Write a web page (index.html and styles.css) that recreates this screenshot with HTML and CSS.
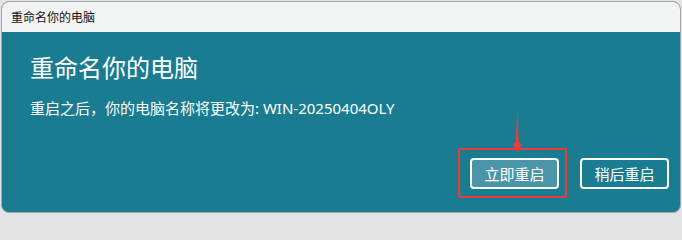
FILE: index.html
```html
<!DOCTYPE html>
<html lang="zh-CN">
<head>
<meta charset="utf-8">
<title>重命名你的电脑</title>
<link rel="stylesheet" href="styles.css">
</head>
<body>
<div class="window">
  <div class="titlebar">重命名你的电脑</div>
  <div class="content">
    <h1 class="heading">重命名你的电脑</h1>
    <p class="message">重启之后，你的电脑名称将更改为: WIN-20250404OLY</p>
    <div class="actions">
      <div class="primary-wrap">
        <button class="btn btn-primary">立即重启</button>
        <span class="highlight"></span>
        <svg class="arrow" width="14" height="44" viewBox="0 0 14 44">
          <polygon points="7,0 7.6,0 8.6,30 11.5,32 7.3,41 3,32 5.8,30" fill="#f03a3a"/>
        </svg>
      </div>
      <button class="btn">稍后重启</button>
    </div>
  </div>
</div>
</body>
</html>
```

FILE: styles.css
```css
html, body {
  margin: 0;
  padding: 0;
}
body {
  background: #e4e4e4;
  width: 682px;
  height: 215px;
  overflow: hidden;
  font-family: "Segoe UI", "Noto Sans", "Noto Sans CJK SC", sans-serif;
}
.window {
  margin: 1px 0 0 1px;
  width: 680px;
  height: 212px;
  box-sizing: border-box;
  border: 1px solid #a6a6a6;
  border-radius: 8px;
  overflow: hidden;
  display: flex;
  flex-direction: column;
  background: #197c91;
}
.titlebar {
  height: 30px;
  flex: none;
  background: #f2f3f3;
  color: #111;
  font-size: 12px;
  line-height: 30px;
  padding-left: 9px;
  font-family: "Noto Sans CJK SC", sans-serif;
}
.content {
  flex: 1;
  display: flex;
  flex-direction: column;
  padding: 0 11px 23px 28px;
  color: #fff;
}
.heading {
  margin: 19px 0 0;
  font-size: 24px;
  line-height: 32px;
  font-weight: 400;
  font-family: "Noto Sans CJK SC", sans-serif;
}
.message {
  margin: 15px 0 0;
  font-size: 15px;
  line-height: 20px;
}
.actions {
  margin-top: auto;
  display: flex;
  justify-content: flex-end;
  gap: 21px;
}
.primary-wrap {
  position: relative;
  display: flex;
}
.btn {
  width: 89px;
  height: 31px;
  box-sizing: border-box;
  border: 2px solid #ffffff;
  border-radius: 4px;
  background: transparent;
  color: #fff;
  font-family: "Noto Sans CJK SC", sans-serif;
  font-size: 15px;
  padding: 0;
  line-height: 25px;
}
.btn-primary {
  background: #4a96a8;
}
.highlight {
  position: absolute;
  left: -12px;
  top: -10px;
  width: 109px;
  height: 50px;
  box-sizing: border-box;
  border: 2px solid #f03a3a;
  border-radius: 3px;
}
.arrow {
  position: absolute;
  left: 40px;
  top: -46px;
}
```
